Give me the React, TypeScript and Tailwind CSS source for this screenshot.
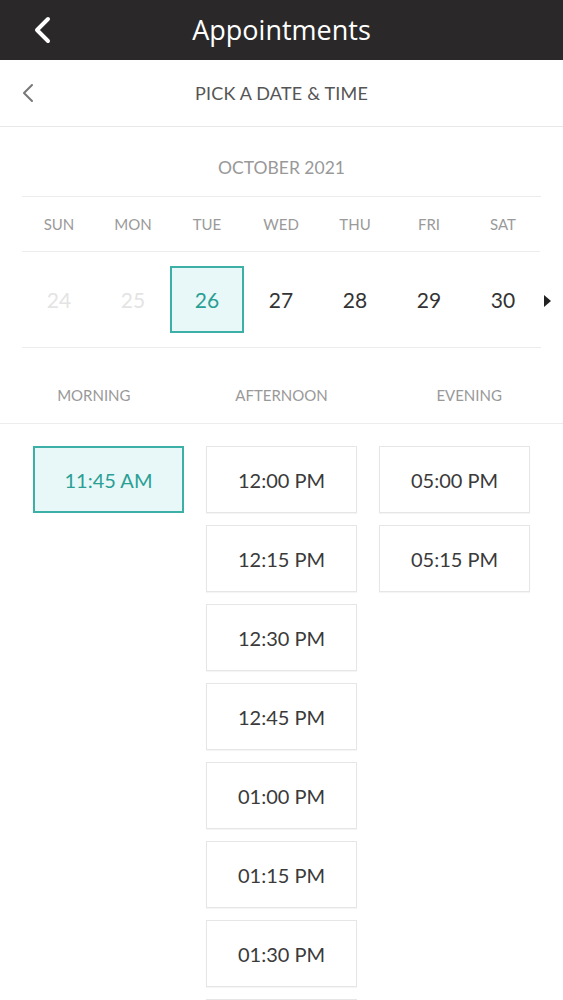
import React from "react";

const days = ["SUN", "MON", "TUE", "WED", "THU", "FRI", "SAT"];
const dates = [
  { n: "24", state: "disabled" },
  { n: "25", state: "disabled" },
  { n: "26", state: "selected" },
  { n: "27", state: "normal" },
  { n: "28", state: "normal" },
  { n: "29", state: "normal" },
  { n: "30", state: "normal" },
];

const morning = ["11:45 AM"];
const afternoon = ["12:00 PM", "12:15 PM", "12:30 PM", "12:45 PM", "01:00 PM", "01:15 PM", "01:30 PM", "01:45 PM"];
const evening = ["05:00 PM", "05:15 PM"];

function Slot({ t, selected }: { t: string; selected?: boolean }) {
  return (
    <div
      className={
        selected
          ? "h-[67px] w-[151px] shrink-0 flex items-center justify-center border-2 border-[#3cb0a6] bg-[#e8f8f8] text-[#2a9f95] text-[20px]"
          : "h-[67px] w-[151px] shrink-0 flex items-center justify-center border border-[#e6e6e6] bg-white text-[#3a3a3a] text-[20px] shadow-[0_1px_1px_rgba(0,0,0,0.04)]"
      }
    >
      {t}
    </div>
  );
}

export default function App() {
  return (
    <div className="w-[563px] h-[1000px] overflow-hidden bg-white" style={{ fontFamily: "Lato, 'Open Sans', sans-serif" }}>
      {/* Top bar */}
      <div className="h-[60px] bg-[#2a2829] relative flex items-center justify-center">
        <svg className="absolute left-[32px] top-[16px]" width="20" height="28" viewBox="0 0 20 28">
          <path d="M16 3 L5 14 L16 25" fill="none" stroke="white" strokeWidth="4" strokeLinecap="round" strokeLinejoin="round" />
        </svg>
        <div className="text-white text-[27px]" style={{ fontFamily: "'Open Sans', sans-serif" }}>Appointments</div>
      </div>

      {/* Subheader */}
      <div className="h-[67px] relative flex items-center justify-center border-b border-[#e8e8e8]">
        <svg className="absolute left-[21px] top-[23px]" width="14" height="20" viewBox="0 0 14 20">
          <path d="M11 2 L3 10 L11 18" fill="none" stroke="#777" strokeWidth="2" strokeLinecap="round" strokeLinejoin="round" />
        </svg>
        <div className="text-[#555] text-[18px] tracking-[0.2px]">PICK A DATE &amp; TIME</div>
      </div>

      {/* Calendar */}
      <div className="px-[22px]">
        <div className="h-[70px] pt-[14px] flex items-center justify-center text-[#999] text-[17.5px] border-b border-[#ececec]">
          OCTOBER 2021
        </div>
        <div className="h-[55px] grid grid-cols-7 w-[518px] items-center border-b border-[#ececec]">
          {days.map((d) => (
            <div key={d} className="text-center text-[#9a9a9a] text-[15px]">{d}</div>
          ))}
        </div>
        <div className="h-[96px] relative flex items-center border-b border-[#ececec]">
          <div className="grid grid-cols-7 w-[518px]">
            {dates.map((d) => (
              <div key={d.n} className="flex justify-center">
                <div
                  className={
                    d.state === "selected"
                      ? "w-[74px] h-[67px] flex items-center justify-center border-2 border-[#3cb0a6] bg-[#e8f8f8] text-[#2a9f95] text-[21px]"
                      : d.state === "disabled"
                      ? "w-[74px] h-[67px] flex items-center justify-center text-[#e4e4e4] text-[21px]"
                      : "w-[74px] h-[67px] flex items-center justify-center text-[#333] text-[21px]"
                  }
                >
                  {d.n}
                </div>
              </div>
            ))}
          </div>
          <svg className="absolute left-[521px] top-[42px]" width="9" height="14" viewBox="0 0 9 14">
            <path d="M1 1 L8 7 L1 13 Z" fill="#222" />
          </svg>
        </div>
      </div>

      {/* Periods */}
      <div className="h-[76px] pt-[20px] grid grid-cols-3 items-center border-b border-[#ececec] text-[15px] text-[#999]">
        <div className="text-center">MORNING</div>
        <div className="text-center">AFTERNOON</div>
        <div className="text-center">EVENING</div>
      </div>

      {/* Slots */}
      <div className="flex gap-[22px] px-[33px] pt-[22px]">
        <div className="flex flex-col gap-[12px]">
          {morning.map((t) => (
            <Slot key={t} t={t} selected />
          ))}
        </div>
        <div className="flex flex-col gap-[12px]">
          {afternoon.map((t) => (
            <Slot key={t} t={t} />
          ))}
        </div>
        <div className="flex flex-col gap-[12px]">
          {evening.map((t) => (
            <Slot key={t} t={t} />
          ))}
        </div>
      </div>
    </div>
  );
}
